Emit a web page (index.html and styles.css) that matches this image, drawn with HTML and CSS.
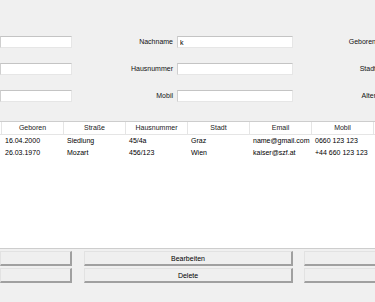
FILE: index.html
```html
<!DOCTYPE html>
<html>
<head>
    <title>Personen</title>
    <link rel="stylesheet" href="styles.css">
</head>
<body>
    <div class="window">
        <form class="fields">
            <input type="text" class="field">
            <label class="lbl">Nachname</label>
            <input type="text" class="field" value="k">
            <label class="lbl">Geboren</label>
            <input type="text" class="field">

            <input type="text" class="field">
            <label class="lbl">Hausnummer</label>
            <input type="text" class="field">
            <label class="lbl">Stadt</label>
            <input type="text" class="field">

            <input type="text" class="field">
            <label class="lbl">Mobil</label>
            <input type="text" class="field">
            <label class="lbl">Alter</label>
            <input type="text" class="field">
        </form>

        <div class="table">
            <div class="row head">
                <div class="cell"></div>
                <div class="cell">Geboren</div>
                <div class="cell">Straße</div>
                <div class="cell">Hausnummer</div>
                <div class="cell">Stadt</div>
                <div class="cell">Email</div>
                <div class="cell">Mobil</div>
                <div class="cell"></div>
            </div>
            <div class="row">
                <div class="cell"></div>
                <div class="cell">16.04.2000</div>
                <div class="cell">Siedlung</div>
                <div class="cell">45/4a</div>
                <div class="cell">Graz</div>
                <div class="cell">name@gmail.com</div>
                <div class="cell">0660 123 123</div>
                <div class="cell"></div>
            </div>
            <div class="row">
                <div class="cell"></div>
                <div class="cell">26.03.1970</div>
                <div class="cell">Mozart</div>
                <div class="cell">456/123</div>
                <div class="cell">Wien</div>
                <div class="cell">kaiser@szf.at</div>
                <div class="cell">+44 660 123 123</div>
                <div class="cell"></div>
            </div>
        </div>

        <div class="buttons">
            <button class="btn"></button>
            <button class="btn">Bearbeiten</button>
            <button class="btn"></button>
            <button class="btn"></button>
            <button class="btn">Delete</button>
            <button class="btn"></button>
        </div>
    </div>
</body>
</html>
```

FILE: styles.css
```css
body {
    margin: 0;
    padding: 0;
    background-color: #f0f0f0;
    font-family: "Liberation Sans", Arial, sans-serif;
    font-size: 7px;
    color: #000;
    overflow: hidden;
}

.window {
    width: 375px;
    height: 302px;
    overflow: hidden;
}

.fields {
    display: grid;
    grid-template-columns: 72px 97px 116px 79px 100px;
    column-gap: 4px;
    row-gap: 15px;
    padding-top: 36px;
    width: 500px;
}

.lbl {
    text-align: right;
    line-height: 12px;
    color: #111;
}

.field {
    box-sizing: border-box;
    height: 12px;
    margin: 0;
    padding: 0 0 0 2px;
    font-family: inherit;
    font-size: 7px;
    background: #fff;
    border: 1px solid #e6e6e6;
    border-top-color: #c4c4c4;
    border-left-color: #cfcfcf;
    outline: none;
}

.table {
    margin-top: 19px;
    height: 126px;
    background: #fff;
    border-top: 1px solid #cdcdcd;
    border-bottom: 1px solid #cdcdcd;
}

.row {
    display: grid;
    grid-template-columns: repeat(8, 62px);
    margin-left: -60px;
    height: 12px;
    line-height: 12px;
}

.head {
    height: 13px;
    line-height: 12px;
    border-bottom: 1px solid #e5e5e5;
    box-sizing: border-box;
}

.head .cell {
    text-align: center;
    border-right: 1px solid #e5e5e5;
    color: #222;
}

.cell {
    padding-left: 3px;
    white-space: nowrap;
    overflow: hidden;
}

.head .cell {
    padding-left: 0;
}

.buttons {
    display: grid;
    grid-template-columns: 72px 209px 100px;
    column-gap: 12px;
    row-gap: 2px;
    margin-top: 2px;
}

.buttons .btn:nth-child(3n) {
    margin-left: -1px;
}

.btn {
    box-sizing: border-box;
    height: 15px;
    margin: 0;
    padding: 0;
    font-family: inherit;
    font-size: 7px;
    color: #000;
    background: #efefef;
    border: 1px solid #e2e2e2;
    border-right: 2px solid #a0a0a0;
    border-bottom: 2px solid #a0a0a0;
}
```
